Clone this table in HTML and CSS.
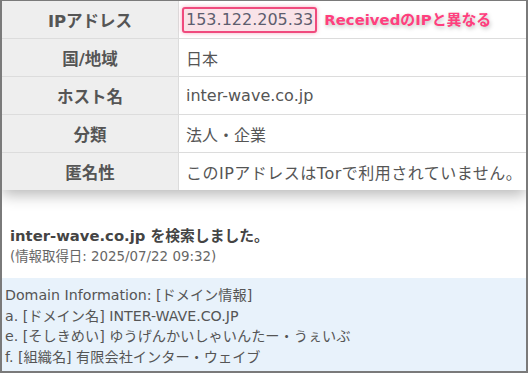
FILE: index.html
```html
<!DOCTYPE html>
<html lang="ja">
<head>
<meta charset="utf-8">
<link rel="stylesheet" href="styles.css">
</head>
<body>
<div class="frame">
  <table class="info">
    <tr>
      <th>IPアドレス</th>
      <td><span class="ip">153.122.205.33</span><span class="note">ReceivedのIPと異なる</span></td>
    </tr>
    <tr><th>国/地域</th><td>日本</td></tr>
    <tr><th>ホスト名</th><td>inter-wave.co.jp</td></tr>
    <tr><th>分類</th><td>法人・企業</td></tr>
    <tr><th>匿名性</th><td class="wide">このIPアドレスはTorで利用されていません。</td></tr>
  </table>
  <div class="search">
    <div class="title">inter-wave.co.jp を検索しました。</div>
    <div class="date">(情報取得日: 2025/07/22 09:32)</div>
  </div>
  <div class="whois">
    <div>Domain Information: [ドメイン情報]</div>
    <div>a. [ドメイン名] INTER-WAVE.CO.JP</div>
    <div>e. [そしきめい] ゆうげんかいしゃいんたー・うぇいぶ</div>
    <div>f. [組織名] 有限会社インター・ウェイブ</div>
  </div>
</div>
</body>
</html>
```
FILE: styles.css
```css
html, body {
  margin: 0;
  padding: 0;
  background: #fff;
}
body {
  font-family: "DejaVu Sans", "Noto Sans CJK JP", sans-serif;
  color: #555;
}
.frame {
  box-sizing: border-box;
  width: 528px;
  height: 373px;
  border: 2px solid #7a7a7a;
  border-top-width: 1px;
  display: flex;
  flex-direction: column;
  overflow: hidden;
}
.info {
  width: 100%;
  border-collapse: collapse;
  box-shadow: 0 5px 14px rgba(0, 0, 0, 0.28);
  position: relative;
  z-index: 1;
  background: #fff;
}
.info th, .info td {
  height: 37px;
  padding: 0;
  border-top: 1px solid #dcdcdc;
  border-bottom: 1px solid #dcdcdc;
  font-size: 16px;
  white-space: nowrap;
}
.info tr:first-child th, .info tr:first-child td { border-top: none; }
.info tr:last-child th, .info tr:last-child td { border-bottom: none; }
.info th {
  width: 176px;
  background: #eeeeee;
  font-weight: bold;
  font-size: 16.5px;
  text-align: center;
  color: #555;
  border-right: 1px solid #dcdcdc;
}
.info td {
  padding-left: 7px;
  color: #555;
}
.info td.wide {
  letter-spacing: 0.5px;
}
.ip {
  display: inline-block;
  font-size: 16px;
  letter-spacing: 0;
  padding: 1px 2px 2px 2px;
  background: #f9e3e8;
  border: 2px solid #f04a7d;
  border-radius: 3px;
  box-shadow: 0 0 4px rgba(240, 70, 120, 0.45);
  color: #5d5d6e;
  margin-left: -4px;
}
.note {
  margin-left: 7px;
  font-size: 14.9px;
  font-weight: bold;
  color: #ff3f7e;
  text-shadow: 1px 2px 4px rgba(0, 0, 0, 0.25);
}
.search {
  padding: 35px 8px 0 8px;
  height: 88px;
  box-sizing: border-box;
}
.title {
  font-size: 14.8px;
  font-weight: bold;
  color: #444;
  line-height: 21px;
}
.date {
  font-size: 13.4px;
  color: #666;
  line-height: 21px;
}
.whois {
  flex: 1;
  background: #e8f2fb;
  padding: 7px 3px 0 3px;
  font-size: 14.2px;
  line-height: 20.6px;
  color: #555;
}
```
